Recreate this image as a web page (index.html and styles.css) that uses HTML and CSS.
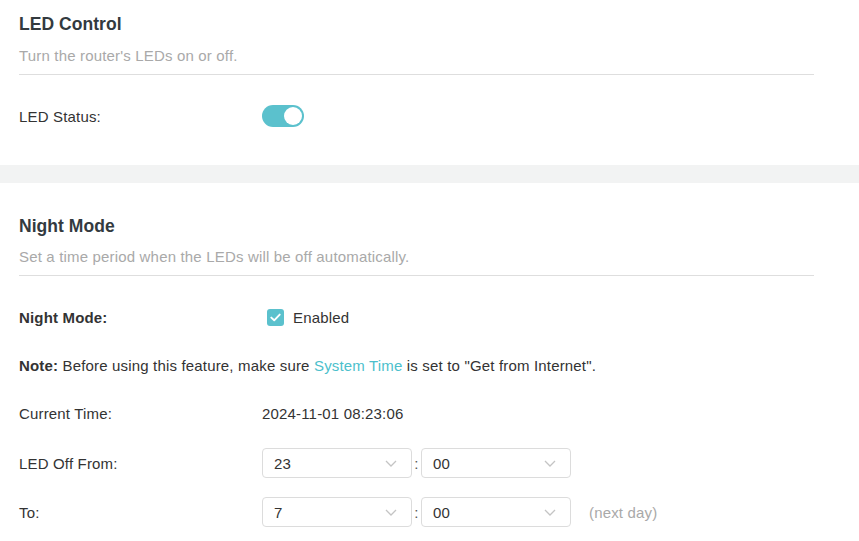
FILE: index.html
```html
<!DOCTYPE html>
<html>
<head>
<meta charset="utf-8">
<link rel="stylesheet" href="styles.css">
</head>
<body>
<section class="panel panel-first">
  <div class="panel-head">
    <h2 class="panel-title">LED Control</h2>
    <p class="panel-desc">Turn the router's LEDs on or off.</p>
  </div>
  <div class="rows rows-first">
    <div class="row">
      <div class="label">LED Status:</div>
      <div class="value">
        <span class="toggle"><span class="knob"></span></span>
      </div>
    </div>
  </div>
</section>
<div class="band"></div>
<section class="panel panel-second">
  <div class="panel-head">
    <h2 class="panel-title">Night Mode</h2>
    <p class="panel-desc">Set a time period when the LEDs will be off automatically.</p>
  </div>
  <div class="rows">
    <div class="row">
      <div class="label label-bold">Night Mode:</div>
      <div class="value">
        <span class="checkbox">
          <svg width="11" height="9" viewBox="0 0 11 9"><path d="M1.3 4.6 L4.2 7.3 L9.7 1.6" fill="none" stroke="#fff" stroke-width="1.9" stroke-linecap="round" stroke-linejoin="round"/></svg>
        </span>
        <span class="check-text">Enabled</span>
      </div>
    </div>
    <div class="row">
      <div class="note"><b>Note:</b> Before using this feature, make sure <span class="link">System Time</span> is set to "Get from Internet".</div>
    </div>
    <div class="row">
      <div class="label">Current Time:</div>
      <div class="value">2024-11-01 08:23:06</div>
    </div>
    <div class="row row-select row-from">
      <div class="label">LED Off From:</div>
      <div class="value">
        <div class="select"><span>23</span><svg class="chev" width="12" height="7" viewBox="0 0 12 7"><path d="M1 1 L6 6 L11 1" fill="none" stroke="#c4c4c4" stroke-width="1.3"/></svg></div>
        <span class="colon">:</span>
        <div class="select"><span>00</span><svg class="chev" width="12" height="7" viewBox="0 0 12 7"><path d="M1 1 L6 6 L11 1" fill="none" stroke="#c4c4c4" stroke-width="1.3"/></svg></div>
      </div>
    </div>
    <div class="row row-select">
      <div class="label">To:</div>
      <div class="value">
        <div class="select"><span>7</span><svg class="chev" width="12" height="7" viewBox="0 0 12 7"><path d="M1 1 L6 6 L11 1" fill="none" stroke="#c4c4c4" stroke-width="1.3"/></svg></div>
        <span class="colon">:</span>
        <div class="select"><span>00</span><svg class="chev" width="12" height="7" viewBox="0 0 12 7"><path d="M1 1 L6 6 L11 1" fill="none" stroke="#c4c4c4" stroke-width="1.3"/></svg></div>
        <span class="hint">(next day)</span>
      </div>
    </div>
  </div>
</section>
</body>
</html>
```
FILE: styles.css
```css
* { box-sizing: border-box; }
html, body { margin: 0; padding: 0; background: #fff; }
body {
  font-family: "Liberation Sans", Arial, sans-serif;
  font-size: 15px;
  letter-spacing: 0.17px;
  color: #333;
  width: 859px;
  height: 541px;
  overflow: hidden;
}
.panel { padding: 0 45px 0 19px; }
.panel-first { padding-top: 12px; padding-bottom: 34px; }
.panel-second { padding-top: 31px; }
.panel-head {
  border-bottom: 1px solid #dedede;
  padding-bottom: 8px;
}
.panel-title {
  margin: 0;
  font-size: 17.5px;
  line-height: 24px;
  font-weight: bold;
  letter-spacing: 0.05px;
  color: #333a3f;
}
.panel-desc {
  margin: 10px 0 0;
  line-height: 20px;
  color: #a9a9a9;
}
.panel-second .panel-desc { margin-top: 9px; }
.band { height: 18px; background: #f2f3f3; }
.rows {
  display: flex;
  flex-direction: column;
  gap: 18px;
  margin-top: 26px;
}
.rows-first { margin-top: 26px; }
.row {
  display: flex;
  align-items: center;
  height: 30px;
}
.row-select { margin-top: 1px; }
.row-from { margin-top: 2px; }
.label { width: 243px; flex: none; }
.label-bold { font-weight: bold; }
.value { display: flex; align-items: center; }
.toggle {
  width: 42px;
  height: 22px;
  border-radius: 11px;
  background: #5bc1cd;
  position: relative;
  display: block;
}
.knob {
  position: absolute;
  right: 2px;
  top: 2px;
  width: 18px;
  height: 18px;
  border-radius: 50%;
  background: #fff;
}
.checkbox {
  width: 17px;
  height: 17px;
  border-radius: 3px;
  background: #5bc1cd;
  margin-left: 5px;
  display: flex;
  align-items: center;
  justify-content: center;
}
.check-text { margin-left: 9px; }
.note b { font-weight: bold; }
.link { color: #4cbfcc; }
.select {
  width: 150px;
  height: 30px;
  border: 1px solid #dcdcdc;
  border-radius: 4px;
  display: flex;
  align-items: center;
  justify-content: space-between;
  padding: 0 14px 0 11px;
}
.colon {
  width: 9px;
  text-align: center;
  color: #555;
}
.hint { margin-left: 18px; color: #a9a9a9; }
```
